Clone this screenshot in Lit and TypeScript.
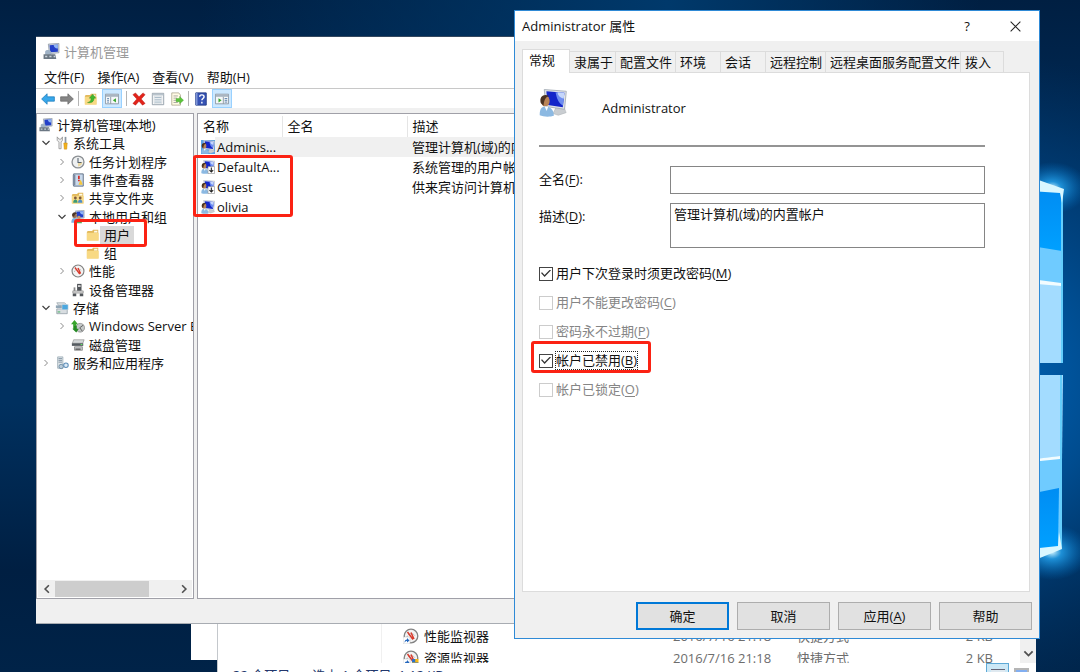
import { LitElement, html, svg, css, nothing } from "lit";
import { customElement, property } from "lit/decorators.js";
import { classMap } from "lit/directives/class-map.js";

/* ---------- icon artwork, all on a 16 x 16 grid ---------- */
const monitor = svg`
  <path d="M5 1l10-.6v8.8L6 10z" fill="#cfd6de" stroke="#7f8b98" stroke-width=".6"/>
  <path d="M6.2 2l7.8-.5v6.7l-7.2.6z" fill="#2440c8"/>
  <path d="M10 1.8l4-.3v3.6c-2 .4-3.600-1-4-3.300z" fill="#8fb4f5"/>`;
const person = svg`
  <circle cx="4" cy="6.500" r="2.800" fill="#9b7355"/>
  <path d="M1.200 6c0-4 5-4.600 5.700-1.600C5 4 4 5.600 3.400 8z" fill="#4b3629"/>
  <path d="M.4 14.500c0-4 1.600-5.300 3.600-5.300s3.800 1.300 3.800 5.300z" fill="#7db1e0"/>`;
const seated = svg`
  <path d="M10 10l4-.5 1.500 4-4.500 1.500-3-1z" fill="#c9cdd1" stroke="#a9aeb3" stroke-width=".3"/>
  <path d="M3 .3L15.600 1.300 14.600 11.600 4 10z" fill="#dfe3e8" stroke="#a5adb6" stroke-width=".5"/>
  <path d="M4.200 1.300L14.500 2.200 13.600 10.400 5 9.200z" fill="#1426c9"/>
  <path d="M9.500 1.800l5 .4-.8 7.300C11 8 10 5 9.500 1.800z" fill="#6d8df0"/>
  <path d="M10.500 1.900l4 .3-.4 3.300c-2-.3-3.200-1.600-3.600-3.600z" fill="#c5d6fb"/>
  <ellipse cx="3.600" cy="6.900" rx="2.500" ry="3.100" fill="#b98458"/>
  <path d="M1 8c-1-4 2-5.500 4.800-4C4.500 4.500 3 5 2.600 9.500z" fill="#4a3323"/>
  <path d="M.4 15c0-4 1.200-5 3.300-5s4.800 1.200 4.800 5.300c-2 .7-6 .7-8.100-.3z" fill="#8cb9e2"/>
  <path d="M3.200 10l1.200 2.500L5.300 10z" fill="#fff"/>`;
const folder = svg`
  <path d="M1 4.500l1-1h5l1-1.500h6v12H1z" fill="#e2b95c"/>
  <path d="M1 5.500h13.500v9H1z" fill="#f8d983"/><path d="M9.500 3h3.500v2H9z" fill="#fffbe8"/>`;
const gauge = svg`
  <circle cx="8" cy="8" r="6.800" fill="#f3f3f3" stroke="#828282" stroke-width="1.300"/>
  <path d="M4 9a4.300 4.300 0 0 1 8-1" fill="none" stroke="#999" stroke-width="1" stroke-dasharray="1 1"/>
  <path d="M4.500 4l5.500 7.500M8 4.500l3 6.500" stroke="#d8392b" stroke-width="1.500"/>`;
const shortcut = svg`<path d="M0 9h7v7H0z" fill="#fff" stroke="#bbb" stroke-width=".5"/>
  <path d="M1.500 15c0-2.500 1-3.500 2.500-3.500V10l2.500 2.500L4 14.500V13c-1 0-2 .5-2.500 2z" fill="#2467bd"/>`;
const paneFrame = svg`<path d="M.5 2.500h15v11H.5z" fill="#f5f7f9" stroke="#8793a0"/>
  <path d="M1 3h14v2.500H1z" fill="#a9b5c2"/>`;

const icons: Record<string, unknown> = {
  computer: svg`${monitor}
    <path d="M2 8c0-2 5-2 5.500 0v3H2z" fill="#9fb2c6"/>
    <path d="M.5 10.500h11l1 4.500H.5z" fill="#6b7783"/>
    <path d="M2 12h2v1.500H2zM6 12h2v1.500H6zM10 12h1.500v1.500H10z" fill="#cbd4dc"/>`,
  tools: svg`<path d="M2.500 1v4l2 2v7.500h2.500V7l1.500-2V1L7 3.500H4.500z" fill="#ececec" stroke="#888" stroke-width=".8"/>
    <path d="M11 1h2v7h-2z" fill="#8c97a2"/><path d="M10 8h4l-.6 7h-2.800z" fill="#f2b21e" stroke="#c98508" stroke-width=".5"/>`,
  clock: svg`<circle cx="8" cy="8" r="6.800" fill="#eef0f1" stroke="#8b8f93" stroke-width="1.500"/>
    <path d="M8 8h5a5 5 0 0 1-5 5z" fill="#ead8a4"/><path d="M8 3.500V8.500h4" fill="none" stroke="#55616e" stroke-width="1.200"/>`,
  events: svg`<path d="M3 1h11v14H3z" fill="#c9d9ec" stroke="#53657c"/><path d="M2 2h3v12H2z" fill="#7d8ba0"/>
    <path d="M8 3h2v4H8zM8 8h2v1.500H8z" fill="#d52e27"/><path d="M8.500 13.500l2.500-6 2.500 6z" fill="#f5c63c"/>`,
  shared: svg`${folder}<circle cx="5" cy="8" r="1.600" fill="#805a3b"/><circle cx="10.500" cy="8" r="1.600" fill="#805a3b"/>
    <path d="M2.500 13.500c0-5 5-5 5 0z" fill="#3c9a76"/><path d="M8 13.500c0-5 5-5 5 0z" fill="#4f8ec9"/>`,
  users: svg`${monitor}${person}<circle cx="9" cy="8.500" r="2" fill="#c49a72"/><path d="M6 15c0-6 6.500-6 6.500 0z" fill="#5fa457"/>`,
  user: seated,
  disabled: svg`${seated}<path d="M8 7.500h7.500V15.500H8z" fill="#fff" stroke="#8e8e8e" stroke-width=".7"/>
    <path d="M11.800 8.500v5M9.700 11.500l2.100 2.300 2.100-2.300" fill="none" stroke="#222" stroke-width="1.200"/>`,
  folder, gauge,
  device: svg`<path d="M7 1h5v8H7z" fill="#4e5256"/><path d="M8 2.500h3v2H8z" fill="#ddd"/>
    <path d="M2 9h12v2.500H2z" fill="#d6d6d6" stroke="#777" stroke-width=".6"/><path d="M2 12h4v3H2zM10 12h4v3h-4z" fill="#54585d"/><path d="M3 5h2v4H3z" fill="#888"/>`,
  storage: svg`<path d="M2 2h9l3 3H4z" fill="#dadfe3" stroke="#8c979f" stroke-width=".7"/><path d="M1 5h9v3H1z" fill="#91a6b5"/>
    <path d="M2 9h12v5.500H2z" fill="#d8dde1" stroke="#7c8992" stroke-width=".7"/><path d="M8 4h7v6H8z" fill="#4ba7df" stroke="#ddd" stroke-width=".6"/><path d="M3 12h3v1H3z" fill="#34a853"/>`,
  backup: svg`<circle cx="10.500" cy="10" r="5" fill="#c4c8c8" stroke="#777" stroke-width=".7"/><path d="M10 10l4-3M10 10l3 4" stroke="#555"/>
    <path d="M0 6l4-5 4 5H6v5.500H2.500V6z" fill="#39a52d"/><path d="M3.500 8h3v3h2.500L6 15.500 1.500 11h2z" fill="#258a24"/>`,
  disk: svg`<path d="M3 2h12l-1.500 4h-12z" fill="#d5d8da" stroke="#7c7c7c" stroke-width=".6"/><path d="M1 6h13v3H1z" fill="#555b60"/><path d="M11 7h2v1h-2z" fill="#6f6"/>
    <path d="M4 10h9v4H4z" fill="#c9cccf" stroke="#666" stroke-width=".7"/><path d="M5 12h6v1.500H5z" fill="#555"/>`,
  services: svg`<path d="M3 1h6v13H3z" fill="#dfe5e9" stroke="#8fa0ab" stroke-width=".8"/><path d="M4 3h4M4 5h4M4 7h4" stroke="#76899a"/>
    <circle cx="7" cy="12" r="2.500" fill="#b8cad8" stroke="#6c8ba4"/><circle cx="12.500" cy="10.500" r="2.600" fill="#dceaf6" stroke="#5e8eb8" stroke-width="1.200"/>`,
  back: svg`<path d="M.7 8L7 2v3.500h8.300v5H7V14z" fill="#37a7ea" stroke="#1977b8" stroke-width=".8"/>`,
  forward: svg`<path d="M15.300 8L9 2v3.500H.7v5H9V14z" fill="#858585" stroke="#666" stroke-width=".8"/>`,
  up: svg`${folder}<path d="M4 12c4-1 4-3 4-5H6l4-4.500L13.500 7h-2c0 4-3 6-7.500 5z" fill="#42b72e" stroke="#24831b" stroke-width=".4"/>`,
  panel: svg`${paneFrame}<path d="M6.500 5.500v8" stroke="#8793a0"/><path d="M2.500 7.500h2M2.500 9.500h2M2.500 11.500h2" stroke="#4e77a4"/><path d="M12.500 7v5L9 9.500z" fill="#35a52c"/>`,
  panelRight: svg`${paneFrame}<path d="M9.500 5.500v8" stroke="#8793a0"/><path d="M11 7.500h3M11 9.500h3M11 11.500h3" stroke="#4e77a4"/><path d="M4 7v5l3.500-2.500z" fill="#35a52c"/>`,
  remove: svg`<path d="M1 3l3-2 4 4.500L12.500 1l2.500 2-4.500 5 4.500 5-3 2-4-4.500L4 15l-3-2 4.500-5z" fill="#e2231a" stroke="#b31812" stroke-width=".5"/>`,
  props: svg`<path d="M1.500 1.500h13v13h-13z" fill="#fdfdfd" stroke="#8e9aa5"/><path d="M2 2h12v2H2z" fill="#b9c4cd"/>
    <path d="M4 6.500h8M4 9h8M4 11.500h8" stroke="#8aa2b5"/><path d="M3.500 5h9v8h-9z" fill="none" stroke="#c4ccd3" stroke-width=".6"/>`,
  export: svg`<path d="M2 1h8l2 2.500V15H2z" fill="#fffbe5" stroke="#a19b7f" stroke-width=".8"/><path d="M4 4.500h5M4 7h4M4 9.500h4M4 12h5" stroke="#8b8b8b" stroke-width=".8"/>
    <path d="M7 7.500h4V5l4.500 4.500L11 13.500V11H7z" fill="#5cc53b" stroke="#3b9326" stroke-width=".4"/>`,
  help: svg`<path d="M2 1h12v14H2z" fill="#3653b5" stroke="#1f3784"/><path d="M2 1h2v14H2z" fill="#7e95d6"/>
    <path d="M6.500 5.500c0-3 5-3 5 0 0 2-2.500 2-2.500 4M9 11v2" stroke="#fff" stroke-width="1.600" fill="none"/>`,
  perf: svg`${gauge}${shortcut}`,
  resource: svg`${gauge}${shortcut}<path d="M9 9h6.500v3c0 2-2 3.500-3.200 4C11 15.500 9 14 9 12z" fill="#f7b916"/><path d="M9 9h3.200v3.500H9zM12.200 12.500h3.300c-.4 2-2.200 3.200-3.300 3.500z" fill="#2d72c9"/>`,
  close: svg`<path d="M2 2l12 12M14 2L2 14" stroke="#222" stroke-width="1.300"/>`,
  left: svg`<path d="M11 2L5 8l6 6" fill="none" stroke="#505050" stroke-width="2.600"/>`,
  right: svg`<path d="M5 2l6 6-6 6" fill="none" stroke="#505050" stroke-width="2.600"/>`,
  down: svg`<path d="M2 5l6 6 6-6" fill="none" stroke="#505050" stroke-width="2.600"/>`,
  collapsed: svg`<path d="M5 2l6 6-6 6" fill="none" stroke="#8c8c8c" stroke-width="2"/>`,
  expanded: svg`<path d="M1 4l7 7 7-7" fill="none" stroke="#404040" stroke-width="2.400"/>`,
};

@customElement("ui-icon")
class UiIcon extends LitElement {
  @property() name = "";
  static styles = css`
    :host { display: inline-block; width: 14px; height: 14px; flex: none; }
    .art { display: block; width: 100%; height: 100%; }
  `;
  render() {
    return html`<svg class="art" viewBox="0 0 16 16" aria-hidden="true">${icons[this.name]}</svg>`;
  }
}

const base = css`
  :host, * { box-sizing: border-box; }
  button, input, textarea { font: inherit; color: inherit; margin: 0; padding: 0; border: 0; background: none; border-radius: 0; }
  u { text-underline-offset: 2px; }
`;

/* ---------- wallpaper ---------- */
@customElement("desk-wallpaper")
class DeskWallpaper extends LitElement {
  static styles = css`
    :host { display: block; }
    .art { display: block; width: 100%; height: 100%; }
  `;
  render() {
    return html`<svg class="art" viewBox="0 0 1080 672" preserveAspectRatio="none" aria-hidden="true">
      <defs>
        <linearGradient id="sky" x1="0" y1="0" x2="0" y2="1">
          <stop offset="0" stop-color="#001f42"/><stop offset=".3" stop-color="#002f5f"/>
          <stop offset=".6" stop-color="#00305f"/><stop offset=".85" stop-color="#001f42"/><stop offset="1" stop-color="#002348"/>
        </linearGradient>
        <linearGradient id="beam" x1="0" y1="0" x2="1" y2="0">
          <stop offset="0" stop-color="#00396b" stop-opacity="0"/><stop offset=".6" stop-color="#00396b"/><stop offset="1" stop-color="#00396b" stop-opacity="0"/>
        </linearGradient>
        <radialGradient id="halo" gradientUnits="userSpaceOnUse" cx="970" cy="380" r="330">
          <stop offset="0" stop-color="#0067bd"/><stop offset=".4" stop-color="#004c8f"/><stop offset="1" stop-color="#003a70" stop-opacity="0"/>
        </radialGradient>
        <radialGradient id="flare"><stop offset="0" stop-color="#d5f6ff"/><stop offset=".25" stop-color="#25a5f0" stop-opacity=".8"/><stop offset="1" stop-color="#0073c8" stop-opacity="0"/></radialGradient>
        <linearGradient id="top" x1="0" y1="0" x2="0" y2="1"><stop offset="0" stop-color="#008df3"/><stop offset="1" stop-color="#00a0ff"/></linearGradient>
      </defs>
      <path d="M0 0h1080v672H0z" fill="url(#sky)"/>
      <path d="M0 0h1080v672H0z" fill="url(#halo)"/>
      <path d="M200 0h780v36H200z" fill="url(#beam)"/>
      <ellipse cx="1052" cy="188" rx="36" ry="26" fill="url(#flare)"/>
      <ellipse cx="1052" cy="552" rx="38" ry="28" fill="url(#flare)"/>
      <path d="M1000 190l63 1v172h-63z" fill="#a3dcff"/>
      <path d="M1000 190l63 1v95l-63-10z" fill="#6fcbff"/>
      <path d="M1000 190l62 1v60l-62-10z" fill="url(#top)"/>
      <path d="M1000 275l61 8v3l-61-5z" fill="#f2fcff"/>
      <path d="M1000 375h63l-2 173h-61z" fill="#a3dcff"/>
      <path d="M1000 463l61-7-1 90h-60z" fill="#6fcbff"/>
      <path d="M1000 500l59-12-1 60h-58z" fill="url(#top)"/>
      <path d="M1000 463l60-7v3l-60 6z" fill="#f2fcff"/>
      <path d="M1061 191h2v172h-2zM1060 375h2v173h-2z" fill="#64cdfb"/>
      <path d="M1030 177l34 12-2 14-2-10-30-2z" fill="#d9f7ff"/>
      <path d="M1030 549l28-3 1-14 3 17-32 13z" fill="#d9f7ff"/>
    </svg>`;
  }
}

/* ---------- computer management console ---------- */
type Node = { text: string; icon: string; level: number; open?: boolean; selected?: boolean };
const tree: Node[] = [
  { text: "计算机管理(本地)", icon: "computer", level: 0 },
  { text: "系统工具", icon: "tools", level: 1, open: true },
  { text: "任务计划程序", icon: "clock", level: 2, open: false },
  { text: "事件查看器", icon: "events", level: 2, open: false },
  { text: "共享文件夹", icon: "shared", level: 2, open: false },
  { text: "本地用户和组", icon: "users", level: 2, open: true },
  { text: "用户", icon: "folder", level: 3, selected: true },
  { text: "组", icon: "folder", level: 3 },
  { text: "性能", icon: "gauge", level: 2, open: false },
  { text: "设备管理器", icon: "device", level: 2 },
  { text: "存储", icon: "storage", level: 1, open: true },
  { text: "Windows Server Backup", icon: "backup", level: 2, open: false },
  { text: "磁盘管理", icon: "disk", level: 2 },
  { text: "服务和应用程序", icon: "services", level: 1, open: false },
];
const accounts = [
  ["Adminis...", "管理计算机(域)的内置帐户", "user"],
  ["DefaultA...", "系统管理的用户帐户。", "disabled"],
  ["Guest", "供来宾访问计算机或访问域的内置帐户", "disabled"],
  ["olivia", "", "user"],
];

@customElement("management-window")
class ManagementWindow extends LitElement {
  static styles = [base, css`
    :host { display: flex; flex-direction: column; background: #f0f0f0; border-top: 1px solid #33475e; border-bottom: 1px solid #a8acb2; line-height: 18px; }
    .title { display: flex; align-items: center; gap: 4px; height: 29px; padding: 0 7px; background: #fff; color: #999; }
    .title ui-icon { width: 17px; height: 17px; }
    .menu { display: flex; gap: 13px; height: 23px; padding-left: 8px; background: #fff; border-bottom: 1px solid #c8c8c8; }
    .tools { display: flex; align-items: center; height: 19px; padding-left: 4px; gap: 4px; background: #fff; }
    .tool { display: grid; place-items: center; width: 15px; height: 19px; }
    .on { width: 20px; height: 19px; background: #cce8ff; border: 1px solid #99d1ff; }
    .sep { width: 1px; height: 15px; background: #b5b5b5; }
    .panes { display: grid; grid-template-columns: 158px 1fr; gap: 3px; flex: 1; margin-top: 5px; min-height: 0; }
    .pane { background: #fff; border: 1px solid #a0a0a8; min-width: 0; overflow: hidden; }
    .left { display: flex; flex-direction: column; }
    .tree { display: grid; grid-template-rows: repeat(14, 1fr); height: 256px; margin: 2px 0 0; padding: 0 0 0 2px; list-style: none; }
    .node { display: flex; align-items: center; gap: 4px; white-space: nowrap; min-height: 0; }
    .twist { display: grid; place-items: center; width: 10px; flex: none; }
    .twist ui-icon { width: 8px; height: 8px; }
    .l1 { padding-left: 2px; }
    .l2 { padding-left: 18px; }
    .l3 { padding-left: 33px; }
    .picked { background: #d9d9d9; padding: 0 4px; margin-left: -4px; }
    .scroll { display: flex; align-items: center; height: 17px; margin: auto 1px 1px; background: #f0f0f0; }
    .arrow { display: grid; place-items: center; width: 17px; height: 17px; }
    .arrow ui-icon { width: 10px; height: 10px; }
    .track { flex: 1; height: 16px; }
    .thumb { width: 78%; height: 100%; background: #cdcdcd; }
    .list { width: 100%; border-collapse: collapse; table-layout: fixed; margin-top: 2px; }
    .list th { height: 21px; padding: 0 0 1px 5px; text-align: left; font-weight: 400; border-right: 1px solid #e5e5e5; }
    .list td { height: 20px; padding: 0 0 0 5px; white-space: nowrap; overflow: hidden; }
    .list .name { padding-left: 3px; }
    .who { display: flex; align-items: center; gap: 2px; }
    .active { background: linear-gradient(90deg, #fff 17px, #f0f0f0 17px); }
    .active ui-icon { background: #5ba3e6; }
    .c1 { width: 84px; } .c2 { width: 125px; }
    .status { height: 24px; }
  `];
  private tool(icon: string, label: string, on = false) {
    return html`<button class=${classMap({ tool: true, on })} aria-label=${label}><ui-icon name=${icon}></ui-icon></button>`;
  }
  render() {
    const sep = html`<span class="sep"></span>`;
    return html`
      <header class="title"><ui-icon name="computer"></ui-icon><span>计算机管理</span></header>
      <nav class="menu">${["文件(F)", "操作(A)", "查看(V)", "帮助(H)"].map((m) => html`<button>${m}</button>`)}</nav>
      <div class="tools">
        ${this.tool("back", "后退")}${this.tool("forward", "前进")}${sep}
        ${this.tool("up", "向上")}${this.tool("panel", "控制台树", true)}${sep}
        ${this.tool("remove", "删除")}${this.tool("props", "属性")}${this.tool("export", "导出")}${sep}
        ${this.tool("help", "帮助")}${this.tool("panelRight", "操作窗格", true)}
      </div>
      <div class="panes">
        <div class="pane left">
          <ul class="tree" role="tree">
            ${tree.map((n) => html`<li class="node l${n.level}" role="treeitem">
              ${n.level === 0 ? nothing
                : html`<span class="twist">${n.open === undefined ? nothing : html`<ui-icon name=${n.open ? "expanded" : "collapsed"}></ui-icon>`}</span>`}
              <ui-icon name=${n.icon}></ui-icon><span class=${classMap({ picked: !!n.selected })}>${n.text}</span></li>`)}
          </ul>
          <div class="scroll">
            <button class="arrow" aria-label="向左"><ui-icon name="left"></ui-icon></button>
            <div class="track"><div class="thumb"></div></div>
            <button class="arrow" aria-label="向右"><ui-icon name="right"></ui-icon></button>
          </div>
        </div>
        <div class="pane">
          <table class="list">
            <thead><tr><th class="c1">名称</th><th class="c2">全名</th><th>描述</th></tr></thead>
            <tbody>${accounts.map(([name, about, icon], i) => html`<tr class=${classMap({ active: i === 0 })}>
              <td class="name"><div class="who"><ui-icon name=${icon}></ui-icon><span>${name}</span></div></td><td></td><td>${about}</td></tr>`)}</tbody>
          </table>
        </div>
      </div>
      <footer class="status"></footer>`;
  }
}

/* ---------- explorer window at the back ---------- */
@customElement("explorer-window")
class ExplorerWindow extends LitElement {
  static styles = [base, css`
    :host { display: flex; flex-direction: column; background: #fff; border-left: 1px solid #c4c8cc; overflow: hidden; line-height: 18px; }
    .body { display: flex; height: 63px; overflow: hidden; }
    .nav { width: 164px; border-right: 1px solid #f0f0f0; }
    .files { flex: 1; border-collapse: collapse; table-layout: fixed; margin-top: 25px; align-self: flex-start; }
    .files td { height: 22px; padding: 0; color: #6d6d6d; white-space: nowrap; }
    .files .file { color: #111; padding-left: 21px; width: 291px; }
    .item { display: flex; align-items: center; gap: 5px; }
    .item ui-icon { width: 16px; height: 16px; }
    .date { width: 124px; }
    .files .size { text-align: right; padding-right: 27px; }
    .bar { display: grid; place-items: center; align-content: end; width: 16px; background: #f0f0f0; padding-bottom: 4px; }
    .bar ui-icon { width: 11px; height: 11px; }
    .status { display: flex; gap: 22px; padding: 3px 0 0 15px; color: #23376c; white-space: nowrap; }
    .views { display: flex; gap: 5px; margin: -3px 7px 0 auto; }
    .view { display: grid; place-items: center; width: 23px; height: 20px; background: #cce8f6; border: 1px solid #5ea9d6; }
    .lines { width: 14px; height: 8px; background: repeating-linear-gradient(#667 0 1px, #dfe9f0 1px 3px); }
    .big { width: 15px; height: 12px; margin-top: 5px; background: #82aef0; border: 2px solid #b5b5b5; }
  `];
  render() {
    const rows = [["perf", "性能监视器"], ["resource", "资源监视器"]];
    return html`
      <div class="body">
        <div class="nav"></div>
        <table class="files"><tbody>${rows.map(([icon, name]) => html`<tr>
          <td class="file"><div class="item"><ui-icon name=${icon}></ui-icon><span>${name}</span></div></td>
          <td class="date">2016/7/16 21:18</td><td>快捷方式</td><td class="size">2 KB</td></tr>`)}</tbody></table>
        <div class="bar"><ui-icon name="down"></ui-icon></div>
      </div>
      <div class="status"><span>32 个项目</span><span>选中 1 个项目&nbsp; 1.12 KB</span>
        <div class="views"><button class="view" aria-label="详细信息"><span class="lines"></span></button><button class="big" aria-label="大图标"></button></div></div>`;
  }
}

/* ---------- account properties dialog ---------- */
const tabs = ["常规", "隶属于", "配置文件", "环境", "会话", "远程控制", "远程桌面服务配置文件", "拨入"];
const options = [
  { text: "用户下次登录时须更改密码", key: "M", on: true, off: false, focus: false },
  { text: "用户不能更改密码", key: "C", on: false, off: true, focus: false },
  { text: "密码永不过期", key: "P", on: false, off: true, focus: false },
  { text: "帐户已禁用", key: "B", on: true, off: false, focus: true },
  { text: "帐户已锁定", key: "O", on: false, off: true, focus: false },
];

@customElement("properties-dialog")
class PropertiesDialog extends LitElement {
  static styles = [base, css`
    :host { display: flex; flex-direction: column; background: #f0f0f0; border: 1px solid #2f8ad6; line-height: 18px; }
    .title { display: flex; align-items: center; height: 30px; padding-left: 7px; background: #fff; }
    .caption { flex: 1; }
    .sys { display: grid; place-items: center; width: 48px; height: 30px; }
    .sys ui-icon { width: 13px; height: 13px; }
    .tabs { display: grid; grid-template-columns: 48px 46px 60px 45px 45px 60px 135px 43px; align-items: end; padding: 8px 7px 0; }
    .tab { height: 21px; border: 1px solid #dcdcdc; border-left: 0; border-bottom: 0; text-align: left; padding-left: 4px; white-space: nowrap; }
    .current { height: 24px; margin-bottom: -1px; padding: 0 0 3px 6px; background: #fff; border-left: 1px solid #dcdcdc; position: relative; }
    .sheet { min-height: 520px; margin: 0 9px 0 7px; padding: 16px 44px 0 16px; background: #fff; border: 1px solid #dcdcdc; }
    .head { display: flex; align-items: center; gap: 35px; height: 38px; }
    .head ui-icon { width: 28px; height: 28px; margin-top: -10px; }
    .rule { height: 2px; margin: 18px 0 19px; border: 0; background: #949494; }
    .fields { display: grid; grid-template-columns: 131px 1fr; gap: 9px 0; }
    .fields label { padding-top: 4px; }
    .box { display: block; width: 100%; height: 28px; border: 1px solid #858585; background: #fff; padding: 1px 3px; resize: none; overflow: hidden; }
    .area { height: 45px; }
    .checks { display: grid; grid-auto-rows: 29px; margin-top: 11px; align-items: center; }
    .check { display: flex; align-items: center; gap: 2px; }
    .tick { appearance: none; width: 14px; height: 14px; border: 1px solid #444; background: #fff; display: grid; place-items: center; }
    .tick:checked::before { content: ""; width: 10px; height: 8px; background: #333; clip-path: polygon(0 45%, 10% 35%, 36% 68%, 90% 0, 100% 10%, 36% 95%); }
    .tick:disabled { border-color: #ccc; }
    .off { color: #858585; }
    .words { border: 1px dotted transparent; line-height: 17px; }
    .focus { border-color: #222; }
    .buttons { display: grid; grid-template-columns: repeat(4, 93px); gap: 8px; justify-content: end; padding: 10px 7px 8px 0; }
    .push { height: 28px; background: #e1e1e1; border: 1px solid #adadad; }
    .main { border: 2px solid #0078d7; }
  `];
  render() {
    return html`
      <header class="title"><span class="caption">Administrator 属性</span>
        <button class="sys" aria-label="说明">?</button><button class="sys" aria-label="关闭"><ui-icon name="close"></ui-icon></button></header>
      <div class="tabs" role="tablist">${tabs.map((t, i) => html`<button role="tab" class=${classMap({ tab: true, current: i === 0 })}>${t}</button>`)}</div>
      <section class="sheet">
        <div class="head"><ui-icon name="user"></ui-icon><span>Administrator</span></div>
        <hr class="rule">
        <div class="fields">
          <label for="full">全名(<u>F</u>):</label><input class="box" id="full" type="text">
          <label for="about">描述(<u>D</u>):</label><textarea class="box area" id="about" .value=${"管理计算机(域)的内置帐户"}></textarea>
        </div>
        <div class="checks">${options.map((o) => html`<label class=${classMap({ check: true, off: o.off })}>
          <input class="tick" type="checkbox" ?checked=${o.on} ?disabled=${o.off}><span class=${classMap({ words: true, focus: o.focus })}>${o.text}(<u>${o.key}</u>)</span></label>`)}</div>
      </section>
      <footer class="buttons"><button class="push main">确定</button><button class="push">取消</button><button class="push">应用(<u>A</u>)</button><button class="push">帮助</button></footer>`;
  }
}

@customElement("app-root")
class AppRoot extends LitElement {
  static styles = css`
    * { box-sizing: border-box; }
    :host { display: block; position: relative; height: 100vh; overflow: hidden; color: #111; font: 13px/18px "Open Sans", "Noto Sans CJK SC", sans-serif; }
    .wall { position: absolute; inset: 0; }
    .sheet { position: absolute; left: 191px; top: 500px; width: 600px; height: 160px; background: #fff; }
    .explorer { position: absolute; left: 217px; top: 600px; width: 819px; height: 100px; }
    .manager { position: absolute; left: 36px; top: 36px; width: 490px; height: 588px; }
    .dialog { position: absolute; left: 514px; top: 10px; width: 526px; }
    .mark { position: absolute; border: 3px solid #fb2213; border-radius: 3px; pointer-events: none; }
    .m1 { left: 74px; top: 219px; width: 73px; height: 28px; }
    .m2 { left: 193px; top: 155px; width: 100px; height: 62px; }
    .m3 { left: 531px; top: 341px; width: 120px; height: 32px; }
  `;
  render() {
    return html`
      <desk-wallpaper class="wall"></desk-wallpaper>
      <div class="sheet"></div>
      <explorer-window class="explorer"></explorer-window>
      <management-window class="manager"></management-window>
      <properties-dialog class="dialog"></properties-dialog>
      <div class="mark m1"></div><div class="mark m2"></div><div class="mark m3"></div>`;
  }
}
